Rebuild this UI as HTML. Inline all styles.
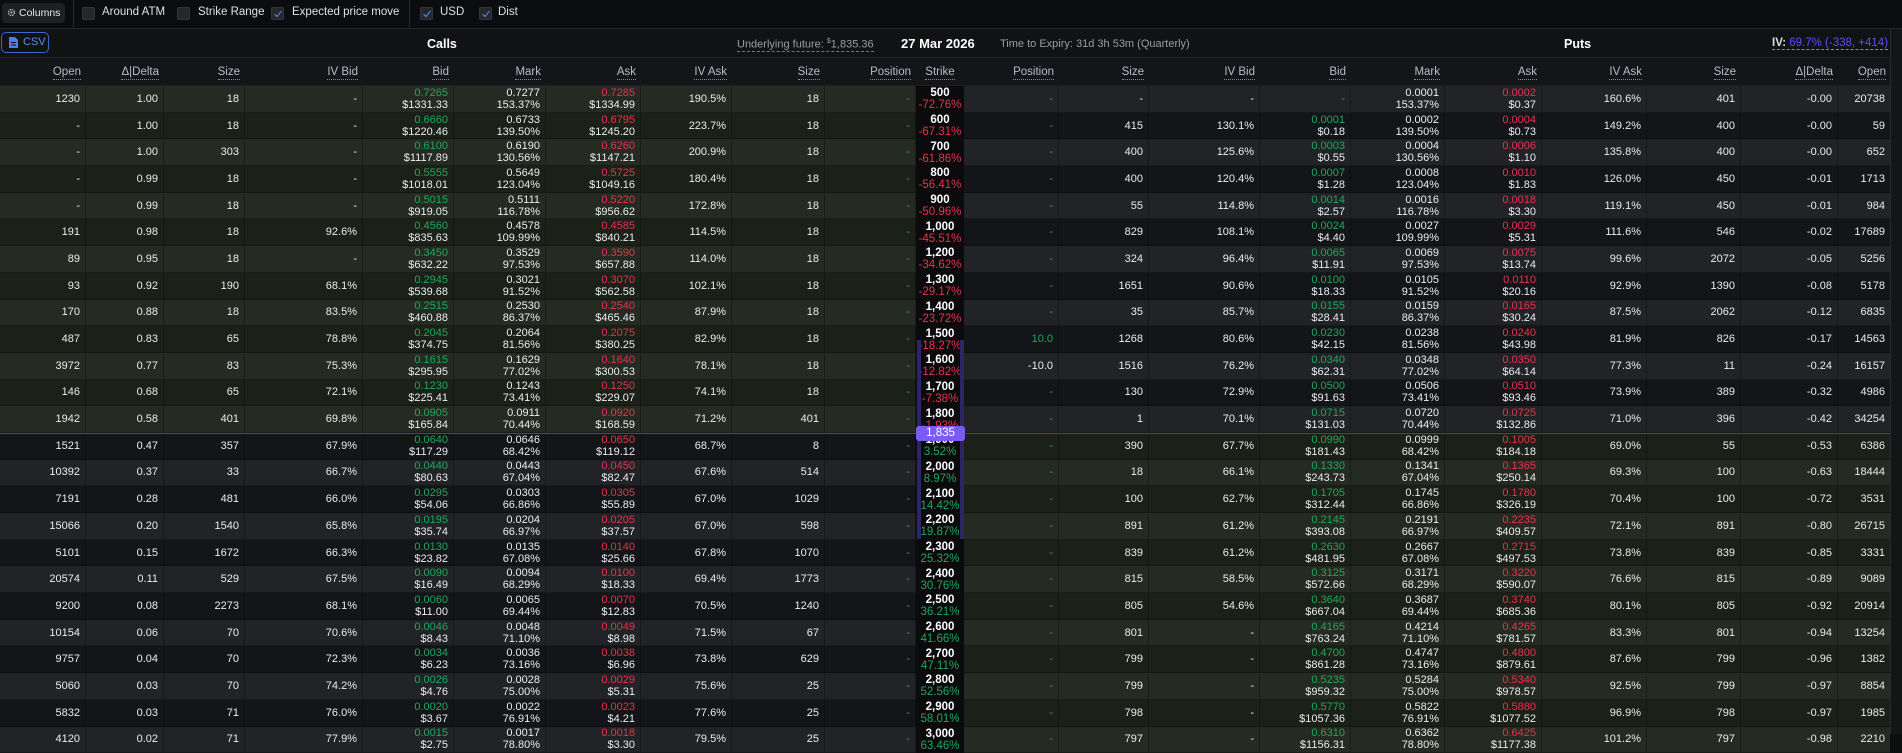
<!DOCTYPE html>
<html><head><meta charset="utf-8"><style>
*{margin:0;padding:0;box-sizing:border-box}
body{width:1902px;height:734px;overflow:hidden;background:#0e0f11;font-family:"Liberation Sans",sans-serif;color:#e4e4e6;position:relative}
.top{position:absolute;left:0;top:0;width:1902px;height:29px;background:#0b0c0f;border-bottom:1px solid #25262a}
.btn{position:absolute;left:2px;top:3px;width:63px;height:20px;background:#1f2024;border-radius:4px;font-size:10.5px;line-height:20px;padding-left:17px;color:#e8e8ea}
.btn svg{position:absolute;left:5px;top:5px}
.sep{position:absolute;top:0;width:1px;height:28px;background:#2a2b2f}
.cb{position:absolute;top:7px;width:13px;height:13px;background:#26272b;border:1px solid #34353a;border-radius:2px}
.cb svg{position:absolute;left:1px;top:1px}
.lb{position:absolute;top:6px;font-size:11.5px;color:#e0e0e2;white-space:nowrap}
.sh{position:absolute;left:0;top:29px;width:1890px;height:29px;background:#111214;border-bottom:1px solid #222327}
.csv{position:absolute;left:1px;top:3px;width:48px;height:21px;border:1px solid #3b68c8;border-radius:5px;color:#5b8ef0;font-size:11px;line-height:19px;padding-left:21px}
.csv svg{position:absolute;left:7px;top:4px}
.hd{position:absolute;left:0;top:58px;width:1890px;height:28px;background:#141518;border-bottom:1px solid #1e1f22}
.g{display:grid;grid-template-columns:86px 78px 81px 118px 91px 92px 95px 91px 93px 91px 48px 95px 90px 111px 91px 94px 97px 105px 94px 97px 53px;width:1890px}
.hd i{font-style:normal;text-align:right;padding-right:5px;font-size:11.5px;color:#b9bcc3;line-height:28px;white-space:nowrap}
.hd i span{border-bottom:1px dotted #8a8d94;padding-bottom:1px}
.rows{position:absolute;left:0;top:86px;width:1890px}
.r{height:26.7px;overflow:hidden}
.r i{font-style:normal;text-align:right;padding-right:5px;font-size:11px;display:flex;flex-direction:column;justify-content:center;line-height:12px;border-right:1px solid rgba(0,0,0,.28);border-bottom:1px solid rgba(0,0,0,.3);color:#ececee;white-space:nowrap}
.r i b{font-weight:normal;display:block}
.r i.k{background:#0b0b0e;text-align:center;padding:0;border:none;font-size:11.5px}
.r i.k b:first-child{font-weight:bold;color:#fff}
.G{color:#1fa85c}.R{color:#e8334d}
.r i.p{color:#1fa85c}
.ce{background:linear-gradient(to right,#252a23 916px,#222326 916px)}
.co{background:linear-gradient(to right,#1b2019 916px,#141518 916px)}
.pe{background:linear-gradient(to right,#222326 916px,#252a23 916px)}
.po{background:linear-gradient(to right,#141518 916px,#1b2019 916px)}
.scr{position:absolute;left:1890px;top:29px;width:12px;height:705px;background:#141517;border-left:1px solid #2a2b2f}
.mid{position:absolute;left:0;top:433px;width:1890px;height:1px;background:#4b3c9e}
.bar{position:absolute;top:340px;width:4px;height:199px;background:#2e2566}
.badge{position:absolute;left:916px;top:426px;width:49px;height:15px;background:#7a5cf5;border-radius:3px;color:#fff;font-size:11.5px;text-align:center;line-height:15px}
</style></head><body>
<div class="top">
<div class="btn"><svg width="9" height="9" viewBox="0 0 10 10"><circle cx="5" cy="5" r="3.3" fill="none" stroke="#bbb" stroke-width="1.6" stroke-dasharray="1.6 1"/><circle cx="5" cy="5" r="1.2" fill="#bbb"/></svg>Columns</div>
<div class="sep" style="left:73px"></div>
<div class="cb" style="left:82px"></div><div class="lb" style="left:102px">Around ATM</div>
<div class="cb" style="left:177px"></div><div class="lb" style="left:198px">Strike Range</div>
<div class="cb" style="left:271px"><svg width="10" height="10" viewBox="0 0 10 10"><path d="M1.5 5.2 L4 7.5 L8.5 2" fill="none" stroke="#4d7fe8" stroke-width="1.2"/></svg></div><div class="lb" style="left:292px">Expected price move</div>
<div class="sep" style="left:409px"></div>
<div class="cb" style="left:420px"><svg width="10" height="10" viewBox="0 0 10 10"><path d="M1.5 5.2 L4 7.5 L8.5 2" fill="none" stroke="#4d7fe8" stroke-width="1.2"/></svg></div><div class="lb" style="left:440px">USD</div>
<div class="cb" style="left:479px"><svg width="10" height="10" viewBox="0 0 10 10"><path d="M1.5 5.2 L4 7.5 L8.5 2" fill="none" stroke="#4d7fe8" stroke-width="1.2"/></svg></div><div class="lb" style="left:498px">Dist</div>
</div>
<div class="sh">
<div class="csv"><svg width="9" height="11" viewBox="0 0 9 11"><path d="M0 0H6L9 3V11H0Z" fill="#4d7fe8"/><rect x="2" y="5" width="5" height="1" fill="#111"/><rect x="2" y="7.5" width="5" height="1" fill="#111"/></svg>CSV</div>
<div style="position:absolute;left:427px;top:8px;font-size:12.5px;font-weight:bold;color:#fff">Calls</div>
<div style="position:absolute;left:737px;top:9px;font-size:11px;color:#9a9da5;border-bottom:1px dashed #777;white-space:nowrap">Underlying future: <sup style="font-size:7px">$</sup>1,835.36</div>
<div style="position:absolute;left:901px;top:7px;font-size:13px;font-weight:bold;color:#fff;white-space:nowrap">27 Mar 2026</div>
<div style="position:absolute;left:1000px;top:9px;font-size:11px;color:#9a9da5;white-space:nowrap">Time to Expiry: 31d 3h 53m (Quarterly)</div>
<div style="position:absolute;left:1564px;top:8px;font-size:12.5px;font-weight:bold;color:#fff">Puts</div>
<div style="position:absolute;left:1772px;top:8px;font-size:11.5px;color:#5a50ff;border-bottom:1px dashed #888;white-space:nowrap"><span style="color:#ddd;font-weight:bold">IV:</span> 69.7% (-338, +414)</div>
</div>
<div class="hd g">
<i><span>Open</span></i><i><span>Δ|Delta</span></i><i><span>Size</span></i><i><span>IV Bid</span></i><i><span>Bid</span></i><i><span>Mark</span></i><i><span>Ask</span></i><i><span>IV Ask</span></i><i><span>Size</span></i><i><span>Position</span></i><i style="text-align:center;padding:0"><span>Strike</span></i><i><span>Position</span></i><i><span>Size</span></i><i><span>IV Bid</span></i><i><span>Bid</span></i><i><span>Mark</span></i><i><span>Ask</span></i><i><span>IV Ask</span></i><i><span>Size</span></i><i><span>Δ|Delta</span></i><i><span>Open</span></i>
</div>
<div class="rows">
<div class="r g ce"><i>1230</i><i>1.00</i><i>18</i><i>-</i><i><b class="G">0.7265</b>$1331.33</i><i><b>0.7277</b>153.37%</i><i><b class="R">0.7285</b>$1334.99</i><i>190.5%</i><i>18</i><i class="p">-</i><i class="k"><b>500</b><b class="R">-72.76%</b></i><i class="p">-</i><i>-</i><i>-</i><i class="p">-</i><i><b>0.0001</b>153.37%</i><i><b class="R">0.0002</b>$0.37</i><i>160.6%</i><i>401</i><i>-0.00</i><i>20738</i></div>
<div class="r g co"><i>-</i><i>1.00</i><i>18</i><i>-</i><i><b class="G">0.6660</b>$1220.46</i><i><b>0.6733</b>139.50%</i><i><b class="R">0.6795</b>$1245.20</i><i>223.7%</i><i>18</i><i class="p">-</i><i class="k"><b>600</b><b class="R">-67.31%</b></i><i class="p">-</i><i>415</i><i>130.1%</i><i><b class="G">0.0001</b>$0.18</i><i><b>0.0002</b>139.50%</i><i><b class="R">0.0004</b>$0.73</i><i>149.2%</i><i>400</i><i>-0.00</i><i>59</i></div>
<div class="r g ce"><i>-</i><i>1.00</i><i>303</i><i>-</i><i><b class="G">0.6100</b>$1117.89</i><i><b>0.6190</b>130.56%</i><i><b class="R">0.6260</b>$1147.21</i><i>200.9%</i><i>18</i><i class="p">-</i><i class="k"><b>700</b><b class="R">-61.86%</b></i><i class="p">-</i><i>400</i><i>125.6%</i><i><b class="G">0.0003</b>$0.55</i><i><b>0.0004</b>130.56%</i><i><b class="R">0.0006</b>$1.10</i><i>135.8%</i><i>400</i><i>-0.00</i><i>652</i></div>
<div class="r g co"><i>-</i><i>0.99</i><i>18</i><i>-</i><i><b class="G">0.5555</b>$1018.01</i><i><b>0.5649</b>123.04%</i><i><b class="R">0.5725</b>$1049.16</i><i>180.4%</i><i>18</i><i class="p">-</i><i class="k"><b>800</b><b class="R">-56.41%</b></i><i class="p">-</i><i>400</i><i>120.4%</i><i><b class="G">0.0007</b>$1.28</i><i><b>0.0008</b>123.04%</i><i><b class="R">0.0010</b>$1.83</i><i>126.0%</i><i>450</i><i>-0.01</i><i>1713</i></div>
<div class="r g ce"><i>-</i><i>0.99</i><i>18</i><i>-</i><i><b class="G">0.5015</b>$919.05</i><i><b>0.5111</b>116.78%</i><i><b class="R">0.5220</b>$956.62</i><i>172.8%</i><i>18</i><i class="p">-</i><i class="k"><b>900</b><b class="R">-50.96%</b></i><i class="p">-</i><i>55</i><i>114.8%</i><i><b class="G">0.0014</b>$2.57</i><i><b>0.0016</b>116.78%</i><i><b class="R">0.0018</b>$3.30</i><i>119.1%</i><i>450</i><i>-0.01</i><i>984</i></div>
<div class="r g co"><i>191</i><i>0.98</i><i>18</i><i>92.6%</i><i><b class="G">0.4560</b>$835.63</i><i><b>0.4578</b>109.99%</i><i><b class="R">0.4585</b>$840.21</i><i>114.5%</i><i>18</i><i class="p">-</i><i class="k"><b>1,000</b><b class="R">-45.51%</b></i><i class="p">-</i><i>829</i><i>108.1%</i><i><b class="G">0.0024</b>$4.40</i><i><b>0.0027</b>109.99%</i><i><b class="R">0.0029</b>$5.31</i><i>111.6%</i><i>546</i><i>-0.02</i><i>17689</i></div>
<div class="r g ce"><i>89</i><i>0.95</i><i>18</i><i>-</i><i><b class="G">0.3450</b>$632.22</i><i><b>0.3529</b>97.53%</i><i><b class="R">0.3590</b>$657.88</i><i>114.0%</i><i>18</i><i class="p">-</i><i class="k"><b>1,200</b><b class="R">-34.62%</b></i><i class="p">-</i><i>324</i><i>96.4%</i><i><b class="G">0.0065</b>$11.91</i><i><b>0.0069</b>97.53%</i><i><b class="R">0.0075</b>$13.74</i><i>99.6%</i><i>2072</i><i>-0.05</i><i>5256</i></div>
<div class="r g co"><i>93</i><i>0.92</i><i>190</i><i>68.1%</i><i><b class="G">0.2945</b>$539.68</i><i><b>0.3021</b>91.52%</i><i><b class="R">0.3070</b>$562.58</i><i>102.1%</i><i>18</i><i class="p">-</i><i class="k"><b>1,300</b><b class="R">-29.17%</b></i><i class="p">-</i><i>1651</i><i>90.6%</i><i><b class="G">0.0100</b>$18.33</i><i><b>0.0105</b>91.52%</i><i><b class="R">0.0110</b>$20.16</i><i>92.9%</i><i>1390</i><i>-0.08</i><i>5178</i></div>
<div class="r g ce"><i>170</i><i>0.88</i><i>18</i><i>83.5%</i><i><b class="G">0.2515</b>$460.88</i><i><b>0.2530</b>86.37%</i><i><b class="R">0.2540</b>$465.46</i><i>87.9%</i><i>18</i><i class="p">-</i><i class="k"><b>1,400</b><b class="R">-23.72%</b></i><i class="p">-</i><i>35</i><i>85.7%</i><i><b class="G">0.0155</b>$28.41</i><i><b>0.0159</b>86.37%</i><i><b class="R">0.0165</b>$30.24</i><i>87.5%</i><i>2062</i><i>-0.12</i><i>6835</i></div>
<div class="r g co"><i>487</i><i>0.83</i><i>65</i><i>78.8%</i><i><b class="G">0.2045</b>$374.75</i><i><b>0.2064</b>81.56%</i><i><b class="R">0.2075</b>$380.25</i><i>82.9%</i><i>18</i><i class="p">-</i><i class="k"><b>1,500</b><b class="R">-18.27%</b></i><i class="p">10.0</i><i>1268</i><i>80.6%</i><i><b class="G">0.0230</b>$42.15</i><i><b>0.0238</b>81.56%</i><i><b class="R">0.0240</b>$43.98</i><i>81.9%</i><i>826</i><i>-0.17</i><i>14563</i></div>
<div class="r g ce"><i>3972</i><i>0.77</i><i>83</i><i>75.3%</i><i><b class="G">0.1615</b>$295.95</i><i><b>0.1629</b>77.02%</i><i><b class="R">0.1640</b>$300.53</i><i>78.1%</i><i>18</i><i class="p">-</i><i class="k"><b>1,600</b><b class="R">-12.82%</b></i><i class="R">-10.0</i><i>1516</i><i>76.2%</i><i><b class="G">0.0340</b>$62.31</i><i><b>0.0348</b>77.02%</i><i><b class="R">0.0350</b>$64.14</i><i>77.3%</i><i>11</i><i>-0.24</i><i>16157</i></div>
<div class="r g co"><i>146</i><i>0.68</i><i>65</i><i>72.1%</i><i><b class="G">0.1230</b>$225.41</i><i><b>0.1243</b>73.41%</i><i><b class="R">0.1250</b>$229.07</i><i>74.1%</i><i>18</i><i class="p">-</i><i class="k"><b>1,700</b><b class="R">-7.38%</b></i><i class="p">-</i><i>130</i><i>72.9%</i><i><b class="G">0.0500</b>$91.63</i><i><b>0.0506</b>73.41%</i><i><b class="R">0.0510</b>$93.46</i><i>73.9%</i><i>389</i><i>-0.32</i><i>4986</i></div>
<div class="r g ce"><i>1942</i><i>0.58</i><i>401</i><i>69.8%</i><i><b class="G">0.0905</b>$165.84</i><i><b>0.0911</b>70.44%</i><i><b class="R">0.0920</b>$168.59</i><i>71.2%</i><i>401</i><i class="p">-</i><i class="k"><b>1,800</b><b class="R">-1.93%</b></i><i class="p">-</i><i>1</i><i>70.1%</i><i><b class="G">0.0715</b>$131.03</i><i><b>0.0720</b>70.44%</i><i><b class="R">0.0725</b>$132.86</i><i>71.0%</i><i>396</i><i>-0.42</i><i>34254</i></div>
<div class="r g po"><i>1521</i><i>0.47</i><i>357</i><i>67.9%</i><i><b class="G">0.0640</b>$117.29</i><i><b>0.0646</b>68.42%</i><i><b class="R">0.0650</b>$119.12</i><i>68.7%</i><i>8</i><i class="p">-</i><i class="k"><b>1,900</b><b class="G">3.52%</b></i><i class="p">-</i><i>390</i><i>67.7%</i><i><b class="G">0.0990</b>$181.43</i><i><b>0.0999</b>68.42%</i><i><b class="R">0.1005</b>$184.18</i><i>69.0%</i><i>55</i><i>-0.53</i><i>6386</i></div>
<div class="r g pe"><i>10392</i><i>0.37</i><i>33</i><i>66.7%</i><i><b class="G">0.0440</b>$80.63</i><i><b>0.0443</b>67.04%</i><i><b class="R">0.0450</b>$82.47</i><i>67.6%</i><i>514</i><i class="p">-</i><i class="k"><b>2,000</b><b class="G">8.97%</b></i><i class="p">-</i><i>18</i><i>66.1%</i><i><b class="G">0.1330</b>$243.73</i><i><b>0.1341</b>67.04%</i><i><b class="R">0.1365</b>$250.14</i><i>69.3%</i><i>100</i><i>-0.63</i><i>18444</i></div>
<div class="r g po"><i>7191</i><i>0.28</i><i>481</i><i>66.0%</i><i><b class="G">0.0295</b>$54.06</i><i><b>0.0303</b>66.86%</i><i><b class="R">0.0305</b>$55.89</i><i>67.0%</i><i>1029</i><i class="p">-</i><i class="k"><b>2,100</b><b class="G">14.42%</b></i><i class="p">-</i><i>100</i><i>62.7%</i><i><b class="G">0.1705</b>$312.44</i><i><b>0.1745</b>66.86%</i><i><b class="R">0.1780</b>$326.19</i><i>70.4%</i><i>100</i><i>-0.72</i><i>3531</i></div>
<div class="r g pe"><i>15066</i><i>0.20</i><i>1540</i><i>65.8%</i><i><b class="G">0.0195</b>$35.74</i><i><b>0.0204</b>66.97%</i><i><b class="R">0.0205</b>$37.57</i><i>67.0%</i><i>598</i><i class="p">-</i><i class="k"><b>2,200</b><b class="G">19.87%</b></i><i class="p">-</i><i>891</i><i>61.2%</i><i><b class="G">0.2145</b>$393.08</i><i><b>0.2191</b>66.97%</i><i><b class="R">0.2235</b>$409.57</i><i>72.1%</i><i>891</i><i>-0.80</i><i>26715</i></div>
<div class="r g po"><i>5101</i><i>0.15</i><i>1672</i><i>66.3%</i><i><b class="G">0.0130</b>$23.82</i><i><b>0.0135</b>67.08%</i><i><b class="R">0.0140</b>$25.66</i><i>67.8%</i><i>1070</i><i class="p">-</i><i class="k"><b>2,300</b><b class="G">25.32%</b></i><i class="p">-</i><i>839</i><i>61.2%</i><i><b class="G">0.2630</b>$481.95</i><i><b>0.2667</b>67.08%</i><i><b class="R">0.2715</b>$497.53</i><i>73.8%</i><i>839</i><i>-0.85</i><i>3331</i></div>
<div class="r g pe"><i>20574</i><i>0.11</i><i>529</i><i>67.5%</i><i><b class="G">0.0090</b>$16.49</i><i><b>0.0094</b>68.29%</i><i><b class="R">0.0100</b>$18.33</i><i>69.4%</i><i>1773</i><i class="p">-</i><i class="k"><b>2,400</b><b class="G">30.76%</b></i><i class="p">-</i><i>815</i><i>58.5%</i><i><b class="G">0.3125</b>$572.66</i><i><b>0.3171</b>68.29%</i><i><b class="R">0.3220</b>$590.07</i><i>76.6%</i><i>815</i><i>-0.89</i><i>9089</i></div>
<div class="r g po"><i>9200</i><i>0.08</i><i>2273</i><i>68.1%</i><i><b class="G">0.0060</b>$11.00</i><i><b>0.0065</b>69.44%</i><i><b class="R">0.0070</b>$12.83</i><i>70.5%</i><i>1240</i><i class="p">-</i><i class="k"><b>2,500</b><b class="G">36.21%</b></i><i class="p">-</i><i>805</i><i>54.6%</i><i><b class="G">0.3640</b>$667.04</i><i><b>0.3687</b>69.44%</i><i><b class="R">0.3740</b>$685.36</i><i>80.1%</i><i>805</i><i>-0.92</i><i>20914</i></div>
<div class="r g pe"><i>10154</i><i>0.06</i><i>70</i><i>70.6%</i><i><b class="G">0.0046</b>$8.43</i><i><b>0.0048</b>71.10%</i><i><b class="R">0.0049</b>$8.98</i><i>71.5%</i><i>67</i><i class="p">-</i><i class="k"><b>2,600</b><b class="G">41.66%</b></i><i class="p">-</i><i>801</i><i>-</i><i><b class="G">0.4165</b>$763.24</i><i><b>0.4214</b>71.10%</i><i><b class="R">0.4265</b>$781.57</i><i>83.3%</i><i>801</i><i>-0.94</i><i>13254</i></div>
<div class="r g po"><i>9757</i><i>0.04</i><i>70</i><i>72.3%</i><i><b class="G">0.0034</b>$6.23</i><i><b>0.0036</b>73.16%</i><i><b class="R">0.0038</b>$6.96</i><i>73.8%</i><i>629</i><i class="p">-</i><i class="k"><b>2,700</b><b class="G">47.11%</b></i><i class="p">-</i><i>799</i><i>-</i><i><b class="G">0.4700</b>$861.28</i><i><b>0.4747</b>73.16%</i><i><b class="R">0.4800</b>$879.61</i><i>87.6%</i><i>799</i><i>-0.96</i><i>1382</i></div>
<div class="r g pe"><i>5060</i><i>0.03</i><i>70</i><i>74.2%</i><i><b class="G">0.0026</b>$4.76</i><i><b>0.0028</b>75.00%</i><i><b class="R">0.0029</b>$5.31</i><i>75.6%</i><i>25</i><i class="p">-</i><i class="k"><b>2,800</b><b class="G">52.56%</b></i><i class="p">-</i><i>799</i><i>-</i><i><b class="G">0.5235</b>$959.32</i><i><b>0.5284</b>75.00%</i><i><b class="R">0.5340</b>$978.57</i><i>92.5%</i><i>799</i><i>-0.97</i><i>8854</i></div>
<div class="r g po"><i>5832</i><i>0.03</i><i>71</i><i>76.0%</i><i><b class="G">0.0020</b>$3.67</i><i><b>0.0022</b>76.91%</i><i><b class="R">0.0023</b>$4.21</i><i>77.6%</i><i>25</i><i class="p">-</i><i class="k"><b>2,900</b><b class="G">58.01%</b></i><i class="p">-</i><i>798</i><i>-</i><i><b class="G">0.5770</b>$1057.36</i><i><b>0.5822</b>76.91%</i><i><b class="R">0.5880</b>$1077.52</i><i>96.9%</i><i>798</i><i>-0.97</i><i>1985</i></div>
<div class="r g pe"><i>4120</i><i>0.02</i><i>71</i><i>77.9%</i><i><b class="G">0.0015</b>$2.75</i><i><b>0.0017</b>78.80%</i><i><b class="R">0.0018</b>$3.30</i><i>79.5%</i><i>25</i><i class="p">-</i><i class="k"><b>3,000</b><b class="G">63.46%</b></i><i class="p">-</i><i>797</i><i>-</i><i><b class="G">0.6310</b>$1156.31</i><i><b>0.6362</b>78.80%</i><i><b class="R">0.6425</b>$1177.38</i><i>101.2%</i><i>797</i><i>-0.98</i><i>2210</i></div>
</div>
<div class="bar" style="left:917px"></div>
<div class="bar" style="left:960px"></div>
<div class="mid"></div>
<div class="badge">1,835</div>
<div class="scr"></div>
</body></html>
